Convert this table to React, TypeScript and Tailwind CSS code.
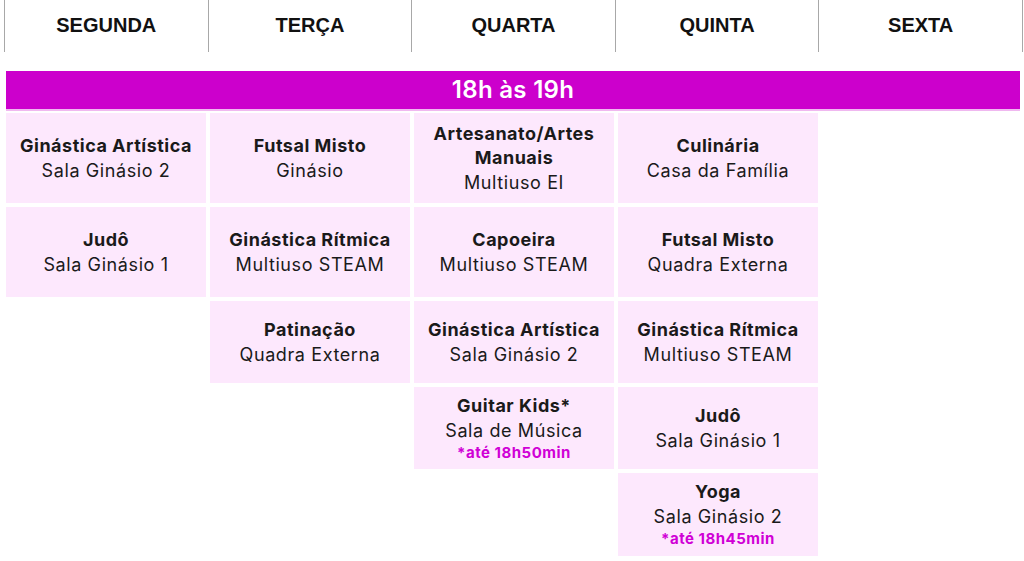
const days = ["SEGUNDA", "TERÇA", "QUARTA", "QUINTA", "SEXTA"];

interface Aula {
  title: string;
  place: string;
  note?: string;
}

const columns: Aula[][] = [
  [
    { title: "Ginástica Artística", place: "Sala Ginásio 2" },
    { title: "Judô", place: "Sala Ginásio 1" },
  ],
  [
    { title: "Futsal Misto", place: "Ginásio" },
    { title: "Ginástica Rítmica", place: "Multiuso STEAM" },
    { title: "Patinação", place: "Quadra Externa" },
  ],
  [
    { title: "Artesanato/Artes Manuais", place: "Multiuso EI" },
    { title: "Capoeira", place: "Multiuso STEAM" },
    { title: "Ginástica Artística", place: "Sala Ginásio 2" },
    { title: "Guitar Kids*", place: "Sala de Música", note: "*até 18h50min" },
  ],
  [
    { title: "Culinária", place: "Casa da Família" },
    { title: "Futsal Misto", place: "Quadra Externa" },
    { title: "Ginástica Rítmica", place: "Multiuso STEAM" },
    { title: "Judô", place: "Sala Ginásio 1" },
    { title: "Yoga", place: "Sala Ginásio 2", note: "*até 18h45min" },
  ],
  [],
];

const rowHeights = ["h-[90px]", "h-[90px]", "h-[82px]", "h-[82px]", "h-[83px]"];

function Cell({ aula, height }: { aula: Aula; height: string }) {
  return (
    <div
      className={`${height} bg-[#fde8fd] flex flex-col items-center justify-center text-center px-2 text-[#1a1a1a]`}
    >
      <span className="text-[18px] font-bold leading-[24px] tracking-[0.5px]">{aula.title}</span>
      <span className="text-[18px] font-normal leading-[25px] tracking-[0.6px]">{aula.place}</span>
      {aula.note && (
        <span className="text-[15px] font-bold leading-[20px] tracking-[0.5px] text-[#d000d6]">
          {aula.note}
        </span>
      )}
    </div>
  );
}

export default function App() {
  return (
    <div className="w-[1024px] h-[561px] bg-white overflow-hidden font-['Inter','Liberation_Sans',sans-serif]">
      {/* Dias da semana */}
      <div className="flex pl-[4px] pr-[1px] h-[52px]">
        {days.map((d, i) => (
          <div
            key={d}
            className={`flex-1 flex items-center justify-center border-l-[1.5px] border-[#a8a8a8] ${
              i === days.length - 1 ? "border-r-[1.5px]" : ""
            }`}
          >
            <span className="font-['Liberation_Sans',Arial,sans-serif] font-bold text-[20px] text-[#111] pb-[2px]">
              {d}
            </span>
          </div>
        ))}
      </div>

      {/* Horário */}
      <div className="mt-[19px] ml-[6px] mr-[4px] h-[40px] bg-[#cc00cc] border-b-2 border-[#f0b8f0] flex items-center justify-center">
        <span className="text-white text-[24px] font-semibold tracking-[0.3px]">18h às 19h</span>
      </div>

      {/* Grade */}
      <div className="flex gap-[4px] ml-[6px] mt-[2px]">
        {columns.map((col, ci) => (
          <div key={ci} className="w-[200px] flex flex-col gap-[4px]">
            {col.map((a, ri) => (
              <Cell key={a.title + ri} aula={a} height={rowHeights[ri]} />
            ))}
          </div>
        ))}
      </div>
    </div>
  );
}
